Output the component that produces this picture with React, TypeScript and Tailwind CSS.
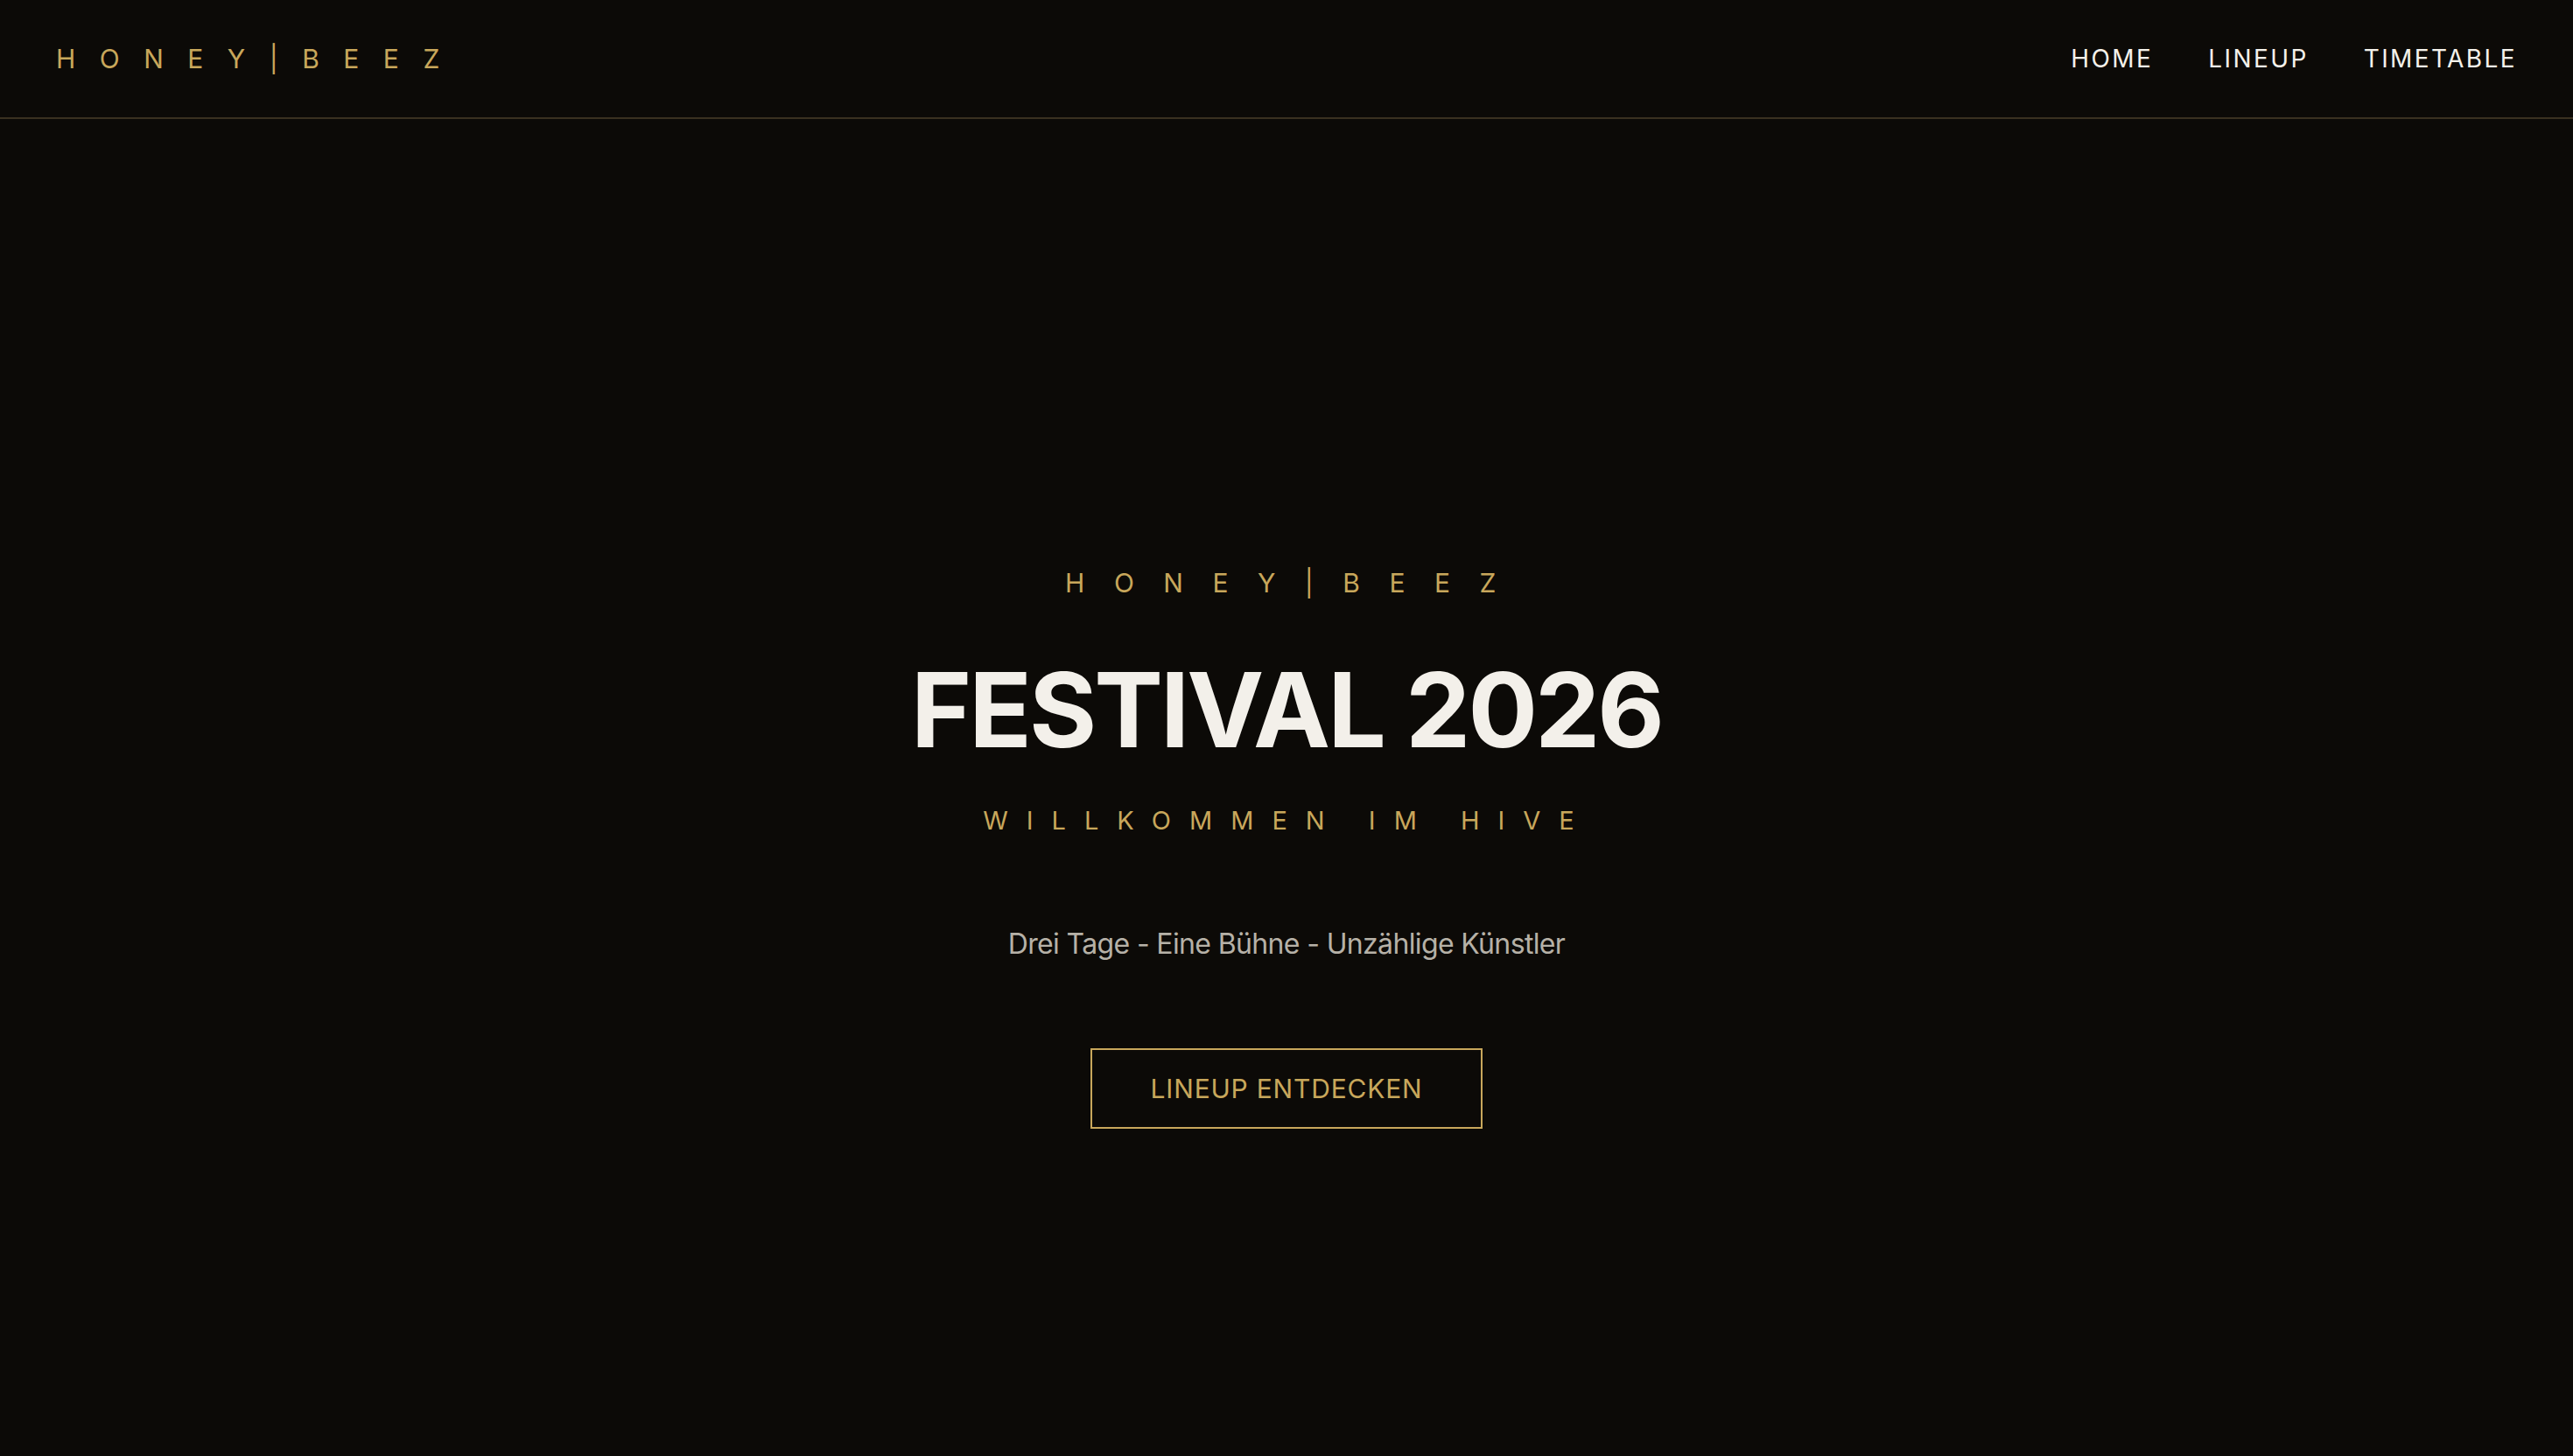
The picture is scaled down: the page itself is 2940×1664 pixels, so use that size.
import React from "react";

const navLinks = ["HOME", "LINEUP", "TIMETABLE"];

function Header() {
	return (
		<header className="flex h-[136px] items-center justify-between border-b-2 border-[#3a3120] px-[64px]">
			<a href="#" className="text-[30px] leading-none tracking-[27.5px] text-[#c8a75b]">
				HONEY|BEEZ
			</a>
			<nav className="flex items-center gap-[63px]">
				{navLinks.map((link) => (
					<a
						key={link}
						href="#"
						className="text-[28px] leading-none tracking-[2.4px] text-[#f4f1ea]"
					>
						{link}
					</a>
				))}
			</nav>
		</header>
	);
}

function Hero() {
	return (
		<section className="flex h-[1664px] flex-col items-center justify-center pt-1 text-center">
			<p className="pl-[20px] text-[30px] leading-none tracking-[33.5px] text-[#c8a75b]">
				HONEY|BEEZ
			</p>
			<h1 className="mt-[71px] text-[118px] font-bold leading-none tracking-[-0.025em] text-[#f3f0ea]">
				FESTIVAL 2026
			</h1>
			<p className="mt-[53px] pl-[3px] text-[29px] leading-none tracking-[21px] text-[#c8a75b]">
				WILLKOMMEN IM HIVE
			</p>
			<p className="mt-[111px] text-[32px] leading-none tracking-[-0.02em] text-[#b6b1a7]">
				Drei Tage - Eine Bühne - Unzählige Künstler
			</p>
			<a
				href="#"
				className="mt-[103px] flex h-[92px] w-[448px] items-center justify-center border-2 border-[#c8a75b] text-[30px] leading-none tracking-[0.8px] text-[#c8a75b]"
			>
				LINEUP ENTDECKEN
			</a>
		</section>
	);
}

export default function App() {
	return (
		<div className="min-h-screen bg-[#0c0a07] font-['Inter',sans-serif]">
			<Header />
			<Hero />
		</div>
	);
}
